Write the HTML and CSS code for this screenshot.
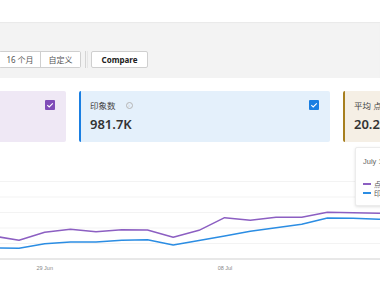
FILE: index.html
```html
<!DOCTYPE html>
<html lang="zh">
<head>
<meta charset="utf-8">
<link rel="stylesheet" href="styles.css">
</head>
<body>
<div class="topbar"></div>
<div class="toolbar">
  <div class="btn-group">
    <button class="btn">16 个月</button>
    <button class="btn">自定义</button>
  </div>
  <span class="sep"></span>
  <button class="btn compare">Compare</button>
</div>
<div class="main">
  <div class="cards">
    <div class="card card-clicks">
      <div class="card-head"><span class="title">点击次数</span><span class="check check-purple"><svg viewBox="0 0 10 10"><path d="M2.3 5.2 L4.2 7 L7.8 3.3" fill="none" stroke="#fff" stroke-width="1.1"/></svg></span></div>
      <div class="value">35.2K</div>
    </div>
    <div class="card card-impr">
      <div class="card-head"><span class="title">印象数</span><span class="info">i</span><span class="check check-blue"><svg viewBox="0 0 10 10"><path d="M2.3 5.2 L4.2 7 L7.8 3.3" fill="none" stroke="#fff" stroke-width="1.1"/></svg></span></div>
      <div class="value">981.7K</div>
    </div>
    <div class="card card-ctr">
      <div class="card-head"><span class="title">平均 点击率</span></div>
      <div class="value">20.2%</div>
    </div>
  </div>
  <div class="chart">
    <svg class="plot" width="380" height="140" viewBox="0 0 380 140">
      <g stroke="#f3f3f3" stroke-width="1">
        <line x1="0" y1="39.5" x2="380" y2="39.5"/>
        <line x1="0" y1="55" x2="380" y2="55"/>
        <line x1="0" y1="70.5" x2="380" y2="70.5"/>
        <line x1="0" y1="86" x2="380" y2="86"/>
        <line x1="0" y1="101.5" x2="380" y2="101.5"/>
      </g>
      <line x1="0" y1="117" x2="380" y2="117" stroke="#d2d2d2" stroke-width="1.2"/>
      <polyline fill="none" stroke="#8c5fc2" stroke-width="1.5" stroke-linejoin="round"
        points="-6.7,94 19,98.3 44.7,90.3 70.4,87.3 96,89.7 121.8,87.7 147.5,88 173.2,95.3 199,88.3 224.6,75.7 250.3,78.3 276,75.3 301.7,75.3 327.4,70.3 353,70.7 378.8,71.3 404,72"/>
      <polyline fill="none" stroke="#2b8de3" stroke-width="1.5" stroke-linejoin="round"
        points="-6.7,106 19,106.3 44.7,101.7 70.4,100 96,100 121.8,98.3 147.5,97.7 173.2,103 199,98.5 224.6,94 250.3,89.3 276,85.7 301.7,82.3 327.4,76 353,76.3 378.8,77.3 404,78"/>
      <text x="44.7" y="128" class="axis-label" text-anchor="middle">29 Jun</text>
      <text x="225" y="128" class="axis-label" text-anchor="middle">08 Jul</text>
    </svg>
    <div class="tooltip">
      <div class="tt-date">July 14, 2024</div>
      <div class="tt-row"><span class="tt-bar tt-purple"></span>点击次数: 1,204</div>
      <div class="tt-row"><span class="tt-bar tt-blue"></span>印象数: 33,871</div>
    </div>
  </div>
</div>
</body>
</html>
```

FILE: styles.css
```css
html, body {
  margin: 0;
  padding: 0;
  background: #ffffff;
  width: 380px;
  height: 282px;
  overflow: hidden;
  font-family: "Noto Sans", "Noto Sans CJK SC", sans-serif;
  color: #333;
}

.topbar {
  height: 22px;
  background: #ffffff;
}

.toolbar {
  height: 56px;
  box-sizing: border-box;
  background: #f3f3f3;
  box-shadow: inset 0 1px 1px rgba(0,0,0,0.04);
  padding-top: 29px;
  display: flex;
  align-items: flex-start;
  margin-left: -1px;
}

.btn-group {
  display: flex;
  background: #fff;
  border: 1px solid #cfcfcf;
  border-radius: 2px;
}

.btn {
  font-family: "Noto Sans", "Noto Sans CJK SC", sans-serif;
  font-size: 8px;
  color: #555;
  background: #fff;
  border: none;
  height: 15px;
  padding: 0;
  margin: 0;
  line-height: 15px;
}

.btn-group .btn {
  width: 40px;
}

.btn-group .btn + .btn {
  border-left: 1px solid #cfcfcf;
}

.sep {
  width: 1px;
  height: 17px;
  background: #d4d4d4;
  margin: 0 4px 0 4px;
  box-shadow: 2px 0 0 #e6e6e6;
}

.compare {
  width: 57px;
  height: 17px;
  box-sizing: border-box;
  border: 1px solid #cfcfcf;
  border-radius: 2px;
  font-weight: 700;
  font-size: 8px;
  color: #222;
  margin-left: 1px;
}

.main {
  padding-top: 13px;
}

.cards {
  display: flex;
  gap: 13px;
  margin-left: -185px;
}

.card {
  flex: 0 0 251px;
  height: 51px;
  box-sizing: border-box;
  border-radius: 2px;
  padding: 8px 11px 0 9px;
}

.card-clicks {
  background: #efe8f5;
}

.card-impr {
  background: #e4f0fb;
  border-left: 2px solid #1a7fe2;
}

.card-ctr {
  background: #f5efe5;
  border-left: 2px solid #a77f1f;
}

.card-head {
  display: flex;
  align-items: center;
  height: 12px;
}

.title {
  font-size: 8.5px;
  color: #444;
}

.info {
  display: inline-block;
  width: 5px;
  height: 5px;
  border: 0.8px solid #b5b5b5;
  border-radius: 50%;
  font-size: 4px;
  line-height: 5px;
  text-align: center;
  color: #b5b5b5;
  margin-left: 10px;
}

.check {
  margin-left: auto;
  width: 10px;
  height: 10px;
  border-radius: 1px;
  display: flex;
}

.check svg {
  width: 10px;
  height: 10px;
}

.check-purple {
  background: #7f4bb8;
}

.check-blue {
  background: #1a7fe2;
}

.value {
  font-size: 13px;
  font-weight: 600;
  color: #333;
  margin-top: 4px;
  line-height: 18px;
}

.chart {
  position: relative;
  height: 140px;
}

.plot {
  display: block;
}

.axis-label {
  font-family: "Liberation Sans", sans-serif;
  font-size: 5.5px;
  fill: #888;
}

.tooltip {
  position: absolute;
  left: 355px;
  top: 5px;
  width: 110px;
  height: 59px;
  box-sizing: border-box;
  background: #fff;
  border: 1px solid #ececec;
  box-shadow: 0 1px 3px rgba(0,0,0,0.12);
  border-radius: 2px;
  padding: 9px 0 0 7px;
}

.tt-date {
  font-family: "Liberation Sans", sans-serif;
  font-size: 7.5px;
  color: #666;
  margin-bottom: 13px;
}

.tt-row {
  display: flex;
  align-items: center;
  font-size: 7px;
  color: #555;
  height: 9.5px;
}

.tt-bar {
  width: 8px;
  height: 2px;
  margin-right: 3px;
}

.tt-purple {
  background: #8c5fc2;
}

.tt-blue {
  background: #2b8de3;
}
```
